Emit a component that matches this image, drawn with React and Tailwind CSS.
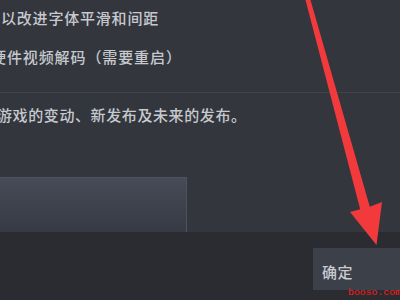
export default function App() {
  const font = { fontFamily: '"Noto Sans CJK SC", "Noto Sans", sans-serif' };

  return (
    <div
      className="relative w-[400px] h-[300px] overflow-hidden bg-[#2a2c31]"
      style={font}
    >
      <div className="h-[232px] bg-[#33363d] flex flex-col">
        <div className="pt-[8px] h-[28px]">
          <p className="ml-[1px] text-[15px] font-medium leading-[20px] tracking-[0.8px] text-[#c6c9ce] whitespace-nowrap">
            以改进字体平滑和间距
          </p>
        </div>
        <div className="pt-[19px] h-[47px]">
          <p className="ml-[-9px] text-[15px] font-medium leading-[20px] tracking-[0.9px] text-[#c6c9ce] whitespace-nowrap">
            硬件视频解码（需要重启）
          </p>
        </div>
        <div className="mt-[17px] h-px bg-[#3f434a]" />
        <div className="pt-[12px] h-[40px]">
          <p className="ml-[-3px] text-[15px] font-medium leading-[20px] tracking-[0.6px] text-[#c6c9ce] whitespace-nowrap">
            游戏的变动、新发布及未来的发布。
          </p>
        </div>
        <div className="mt-auto h-[55px] w-[187px] bg-gradient-to-b from-[#474b57] to-[#363a44] border-t border-r border-[#4d525d]" />
      </div>

      <div className="flex justify-end pt-[16px]">
        <div className="w-[87px] h-[42px] bg-[#3c4049] flex items-center pl-[9px] pt-[6px]">
          <span className="text-[15px] font-medium leading-[20px] tracking-[0.5px] text-[#c8cbd0]">确定</span>
        </div>
      </div>

      <svg
        className="absolute left-0 top-0"
        width="400"
        height="300"
        viewBox="0 0 400 300"
      >
        <polygon
          points="305.5,0 310.5,0 369.8,206.7 382,202 376.5,245 350,212 360.2,209.3"
          fill="#f23a3c"
        />
      </svg>

      <span
        className="absolute left-[348px] top-[287px] text-[9.8px] leading-[12px] text-[#ff1a1a] whitespace-nowrap"
        style={{ fontFamily: '"Liberation Mono", monospace' }}
      >
        booso.com
      </span>
    </div>
  );
}
